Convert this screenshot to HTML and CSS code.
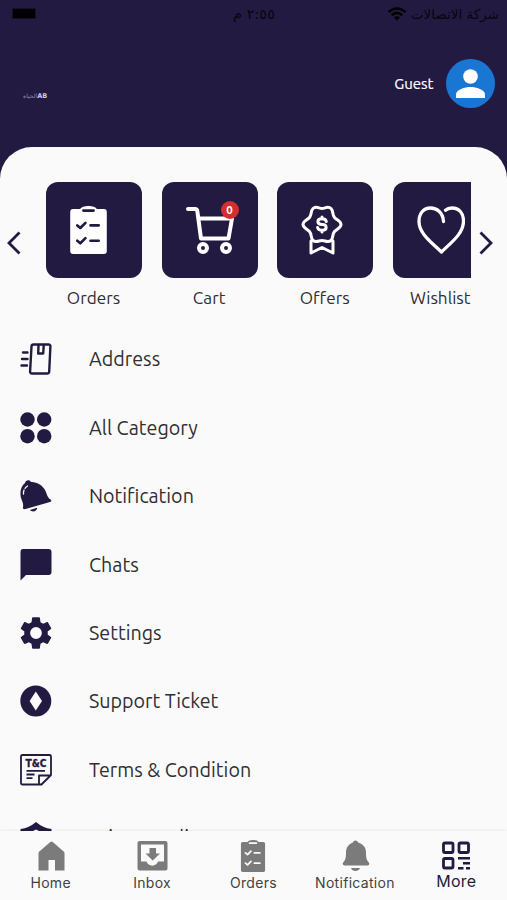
FILE: index.html
```html
<!DOCTYPE html>
<html lang="en">
<head>
  <meta charset="UTF-8" />
  <meta name="viewport" content="width=device-width, initial-scale=1.0"/>
  <title>More</title>
  <link rel="stylesheet" href="styles.css">
</head>
<body>
  <!-- icons used more than once -->
  <svg width="0" height="0" class="defs">
    <mask id="clipMask">
      <path fill="#fff" d="M3 3h7c1-4 15-4 16 0h7q3 0 3 3v38q0 3-3 3H3q-3 0-3-3V6q0-3 3-3z"/>
      <path fill="none" stroke="#000" stroke-width="2.6" stroke-linecap="round" stroke-linejoin="round" d="M13 4.5h10M7 19l3 2.5 5-5M20 19h8M7 34l3 2.5 5-5M20 34h8"/>
    </mask>
    <symbol id="clipboard" viewBox="0 0 36 47"><rect width="36" height="47" fill="currentColor" mask="url(#clipMask)"/></symbol>
  </svg>

  <div class="app">
    <header>
      <div class="status">
        <span class="battery"></span>
        <span class="clock" dir="rtl">٢:٥٥ م</span>
        <span class="carrier">
          <svg width="20" height="14" viewBox="0 0 20 14" fill="none" stroke="#000" stroke-width="2.5"><path d="M1.500 5q8.500-7 17 0M4.700 8.200q5.300-4.300 10.600 0"/><path d="M10 13.500L7 10.500q3-2.400 6 0z" fill="#000" stroke="none"/></svg>
          <span dir="rtl">شركة الاتصالات</span>
        </span>
      </div>
      <div class="profile">
        <div class="logo" dir="rtl"><b>AB</b><span>الحياة</span></div>
        <span class="guest">Guest</span>
        <div class="avatar">
          <svg width="49" height="49" viewBox="0 0 49 49" fill="#fff"><circle cx="24.500" cy="17.500" r="7.300"/><path d="M10 39v-3.500c0-5 9-7.600 14.500-7.600S39 30.500 39 35.500V39z"/></svg>
        </div>
      </div>
    </header>

    <main>
      <section class="quick">
        <svg class="arrow" width="14" height="24" viewBox="0 0 14 24"><path d="M12.500 1.500L2 12l10.500 10.500"/></svg>
        <div class="strip">
          <div class="item">
            <div class="tile"><svg class="clip" width="37" height="48"><use href="#clipboard"/></svg></div>
            <span>Orders</span>
          </div>
          <div class="item">
            <div class="tile">
              <svg class="cart" width="48" height="49" viewBox="0 0 48 49" fill="none" stroke="#fff" stroke-width="4" stroke-linecap="round" stroke-linejoin="round"><path d="M2 3h7q2 0 2.300 2l3.700 27.500h27.500L46 12.500H12.500"/><circle cx="17" cy="42" r="4"/><circle cx="40" cy="42" r="4"/></svg>
              <b class="badge">0</b>
            </div>
            <span>Cart</span>
          </div>
          <div class="item">
            <div class="tile">
              <svg class="award" width="42" height="50" viewBox="0 0 42 50" fill="none" stroke="#fff" stroke-width="3" stroke-linecap="round" stroke-linejoin="round"><path d="M12 3.500C15 .5 18 3.500 21 3.500s6-3 9 0c2.500 2.500 1 6 3.500 9 2 2.500 6.500 3.500 6.500 7s-4.500 4.500-6.500 7c-2.500 3-1 6.500-3.500 9-3 2.500-6 0-9 0s-6 2.500-9 0c-2.500-2.500-1-6-3.500-9-2-2.500-6.500-3.500-6.500-7s4.500-4.500 6.500-7c2.500-3 1-6.500 3.500-9z"/><path d="M10 36v12l11-5.500L32 48V36"/><path d="M25.300 16.500c-.3-2-2-2.800-4.300-2.800-5.500 0-5.500 5.800 0 5.800s5.500 5.800 0 5.800c-2.500 0-4-1-4.400-2.800M21 12v1.500M21 25.500V27"/></svg>
            </div>
            <span>Offers</span>
          </div>
          <div class="item">
            <div class="tile"><svg class="heart" width="48" height="48" viewBox="0 0 48 48" fill="none" stroke="#fff" stroke-width="3.300" stroke-linecap="round" stroke-linejoin="round"><path d="M26.500 15.500C26 6 19.500 2 13.500 2 6.500 2 2 7.500 2 15.500 2 28 15.500 37 24.500 46 33.500 37 46.500 28 46.500 15 46.500 7 42 2 35 2c-2.500 0-5 .8-6.500 2.200"/></svg></div>
            <span>Wishlist</span>
          </div>
        </div>
        <svg class="arrow" width="14" height="24" viewBox="0 0 14 24"><path d="M1.500 1.500L12 12 1.500 22.500"/></svg>
      </section>

      <ul class="menu">
        <li>
          <svg width="32" height="32" viewBox="0 0 32 32" fill="none" stroke="currentColor" stroke-width="2.400" stroke-linecap="round" stroke-linejoin="round"><path d="M13.500 1.500h15q2 0 1.900 2l-1.200 25q-.1 2-2 2H12q-2 0-1.900-2l1.400-25q.1-2 2-2zM18.500 2.500l-.3 8h5l.5-8M3 9.500h4.500M2 16h5.500M1.500 22.500h5.500"/></svg>
          <span>Address</span>
        </li>
        <li>
          <svg width="32" height="32" viewBox="0 0 32 32" fill="currentColor"><circle cx="7.500" cy="7.500" r="7.200"/><circle cx="24.200" cy="7.500" r="7.200"/><circle cx="7.500" cy="24.200" r="7.200"/><circle cx="24.200" cy="24.200" r="7.200"/></svg>
          <span>All Category</span>
        </li>
        <li>
          <svg width="32" height="32" viewBox="0 0 32 32" fill="currentColor"><path d="M5 3C5.500-.5 10-.5 11 2c6-.3 12 3.500 14.500 9 2 4.500 2 6.500 5 8.500 1.500 1.300 1 2-.5 2.500L5.500 29c-2 .5-3-.3-2.500-2 .8-3-1-6-2-9C-.5 12 1 6 5 3zM10 30l7-2.200c.5 3.500-5 5-7 2.200z"/><path d="M3.500 14c-.3-3 1-6 4-8" fill="none" stroke="#fafafa" stroke-width="1.300" stroke-linecap="round" stroke-dasharray="4 2"/></svg>
          <span>Notification</span>
        </li>
        <li>
          <svg width="32" height="32" viewBox="0 0 32 32" fill="currentColor"><path d="M3 0h25.500q3 0 3 3v20q0 3-3 3H6l-5.500 5.500V3q0-3 2.500-3z"/></svg>
          <span>Chats</span>
        </li>
        <li>
          <svg width="32" height="32" viewBox="2.200 2.200 19.600 19.600" fill="currentColor"><path d="M19.140 12.940c.04-.3.060-.61.060-.94s-.02-.64-.07-.94l2.030-1.580c.18-.14.230-.41.120-.61l-1.920-3.320c-.12-.22-.37-.29-.59-.22l-2.390.96c-.5-.38-1.030-.7-1.620-.94l-.36-2.540c-.04-.24-.24-.41-.48-.41h-3.840c-.24 0-.43.170-.47.410l-.36 2.540c-.59.240-1.130.57-1.620.94l-2.390-.96c-.22-.08-.47 0-.59.220L2.740 8.870c-.12.210-.08.470.12.610l2.030 1.580c-.05.300-.09.630-.09.940s.02.640.07.940l-2.030 1.580c-.18.140-.23.410-.12.610l1.920 3.320c.12.220.37.290.59.220l2.390-.96c.5.380 1.030.700 1.620.940l.36 2.540c.05.240.24.410.48.410h3.840c.24 0 .44-.17.470-.41l.36-2.540c.59-.24 1.130-.56 1.620-.94l2.390.96c.22.080.47 0 .59-.22l1.920-3.320c.12-.22.070-.47-.12-.61l-2.010-1.580zM12 15.600a3.600 3.600 0 1 1 0-7.200 3.600 3.600 0 0 1 0 7.200z"/></svg>
          <span>Settings</span>
        </li>
        <li>
          <svg width="32" height="32" viewBox="0 0 32 32" fill="currentColor"><circle cx="15.800" cy="16" r="15.500"/><path d="M15.800 6.500L22 16l-6.200 9.500L9.600 16z" fill="#fafafa"/></svg>
          <span>Support Ticket</span>
        </li>
        <li>
          <svg width="32" height="32" viewBox="0 0 32 32" fill="none" stroke="currentColor" stroke-width="1.800" stroke-linejoin="round"><path d="M2.500 1h27q1.500 0 1.500 1.500V21l-9.500 9.500h-19Q1 30.500 1 29V2.500Q1 1 2.500 1zM19 30.500V21.500h12M6.500 16.800h18.500M6.500 20.500h8M6.500 24.200h6"/><text x="5.500" y="12.500" textLength="21" lengthAdjust="spacingAndGlyphs" class="tc">T&amp;C</text></svg>
          <span>Terms &amp; Condition</span>
        </li>
        <li>
          <svg width="32" height="32" viewBox="0 0 32 32" fill="currentColor"><path d="M16 0q7 6 15.500 7v8c0 8-7 14.500-15.500 17C7.500 29.500.5 23 .5 15V7Q9 6 16 0z"/><path d="M16 7.500l5 2.500v5H11v-5z" fill="#fafafa"/></svg>
          <span>Privacy Policy</span>
        </li>
      </ul>
    </main>

    <nav>
      <a>
        <svg width="32" height="32" viewBox="0 0 32 32" fill="currentColor"><path d="M16.500 1.500q.7 0 1.200.5l11 9.500q.8.700.8 1.700v17.300H20V20h-6.500v10.500h-10V13.200q0-1 .8-1.700l11-9.500q.5-.5 1.200-.5z"/></svg>
        <span>Home</span>
      </a>
      <a>
        <svg width="32" height="32" viewBox="0 0 32 32" fill="currentColor"><path fill-rule="evenodd" d="M3.500 1h26q2 0 2 2v25.500q0 2-2 2h-26q-2 0-2-2V3q0-2 2-2zM5 4.500v17h5.500c1.500 5.500 10 5.500 11.500 0h6v-17z"/><path d="M13.500 8H20v5.500h4L16.700 20.500 9.500 13.500h4z"/></svg>
        <span>Inbox</span>
      </a>
      <a>
        <svg width="26" height="32"><use href="#clipboard"/></svg>
        <span>Orders</span>
      </a>
      <a>
        <svg width="32" height="32" viewBox="0 0 32 32" fill="currentColor"><path d="M16.500.5q2 0 2.700 2c5 1.500 7.800 5 7.800 10 0 5 .5 7.500 2.700 9.800 1.200 1.300.5 3.200-1.200 3.200h-23c-1.700 0-2.400-2-1.200-3.200C6.500 20 7 17.500 7 12.500c0-5 2.800-8.500 6.800-10q.7-2 2.700-2zM12 28h9c-1 4-8 4-9 0z"/></svg>
        <span>Notification</span>
      </a>
      <a class="active">
        <svg width="32" height="32" viewBox="0 0 32 32" fill="none" stroke="currentColor" stroke-width="2.800"><rect x="3.500" y="3" width="9.500" height="9.500" rx="1.500"/><rect x="19" y="3" width="9.500" height="9.500" rx="1.500"/><rect x="3.500" y="18.500" width="9.500" height="9.500" rx="1.500"/><path stroke-width="2.400" d="M18 18.200h12M23 23.300h7M18 28.300h5.500M26 28.300h4"/></svg>
        <span>More</span>
      </a>
    </nav>
  </div>
</body>
</html>
```

FILE: styles.css
```css
* {
  box-sizing: border-box;
}

body {
  margin: 0;
  font-family: "Ubuntu", "Noto Sans", sans-serif;
  color: #2f2f33;
  background: #231a41;
}

.defs {
  position: absolute;
}

.app {
  display: flex;
  flex-direction: column;
  height: 900px;
  overflow: hidden;
}

header {
  height: 147px;
  flex-shrink: 0;
}

.status {
  display: grid;
  grid-template-columns: 1fr auto 1fr;
  align-items: center;
  height: 27px;
  padding: 0 8px 0 13px;
  color: #08050f;
  font-family: "DejaVu Sans", sans-serif;
  font-size: 13.5px;
}

.battery {
  width: 22px;
  height: 9px;
  background: #000;
  outline: 1px solid #15102a;
}

.clock {
  margin-right: 4px;
  font-size: 14.5px;
}

.carrier {
  display: flex;
  align-items: center;
  justify-content: flex-end;
  gap: 4px;
  white-space: nowrap;
}

.profile {
  display: flex;
  align-items: center;
  height: 49px;
  margin-top: 32px;
  padding: 0 12px 0 23px;
}

.logo {
  display: flex;
  align-items: center;
  margin-top: 24px;
  color: #cfc8e4;
  font-family: "DejaVu Sans", sans-serif;
  font-size: 6px;
  line-height: 8px;
}

.logo b {
  font-size: 6.5px;
}

.logo span {
  color: #9187b2;
}

.guest {
  margin-left: auto;
  margin-right: 12.5px;
  color: #fff;
  font-size: 15px;
  -webkit-text-stroke: 0.2px #fff;
}

.avatar {
  width: 49px;
  height: 49px;
  border-radius: 50%;
  background: #1976d2;
}

main {
  flex: 1;
  min-height: 0;
  overflow: hidden;
  padding-top: 34.5px;
  background: #fafafa;
  border-radius: 32px 32px 0 0;
}

.quick {
  display: flex;
  padding: 0 13px 0 7px;
}

.arrow {
  flex-shrink: 0;
  margin-top: 49px;
  fill: none;
  stroke: #231a41;
  stroke-width: 2.8;
}

.strip {
  display: flex;
  gap: 19.6px;
  width: 425px;
  margin: 0 8px 0 25px;
  overflow: hidden;
}

.item {
  display: flex;
  flex-direction: column;
  flex-shrink: 0;
  align-items: center;
  width: 96px;
  font-size: 17.2px;
}

.item > span {
  height: 24px;
  margin: 8px 1px 0 0;
  line-height: 24px;
}

.tile {
  position: relative;
  width: 96px;
  height: 96px;
  background: #231a41;
  border-radius: 12px;
  color: #fff;
}

.tile svg {
  display: block;
  margin: 24px 0 0 24px;
}

.tile .award {
  margin-top: 23px;
}

.badge {
  position: absolute;
  left: 59px;
  top: 19px;
  width: 18px;
  height: 18px;
  border-radius: 50%;
  background: #d32f2f;
  font-size: 11.5px;
  line-height: 18px;
  text-align: center;
}

.menu {
  list-style: none;
  margin: 15.7px 0 0;
  padding: 0 20px;
}

.menu li {
  display: flex;
  align-items: center;
  gap: 37px;
  height: 68.4px;
  font-size: 19.7px;
}

.menu svg {
  color: #231a41;
}

.menu span {
  white-space: nowrap;
}

.tc {
  font: 900 10px "DejaVu Sans", sans-serif;
  fill: #231a41;
  stroke: #231a41;
  stroke-width: 0.3px;
}

nav {
  display: grid;
  grid-template-columns: repeat(5, 1fr);
  height: 69px;
  flex-shrink: 0;
  background: #fafafa;
  box-shadow: 0 -1px 2px rgba(0, 0, 0, 0.06);
  position: relative;
}

nav a {
  display: flex;
  flex-direction: column;
  align-items: center;
  padding-top: 9px;
  color: #7b7b7b;
  font-family: "Inter", sans-serif;
}

nav span {
  color: #424242;
  font-size: 14px;
  line-height: 22px;
  letter-spacing: 0.3px;
}

nav .active,
nav .active span {
  color: #231a41;
}

nav .active span {
  font-size: 16px;
  line-height: 18px;
}
```
